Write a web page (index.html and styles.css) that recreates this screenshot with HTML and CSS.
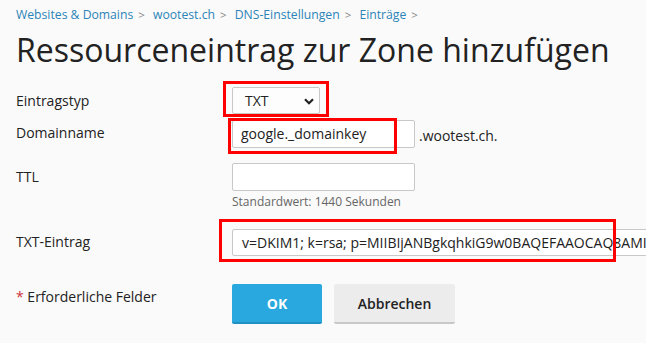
FILE: index.html
```html
<!DOCTYPE html>
<html lang="de">
<head>
<meta charset="utf-8">
<title>Ressourceneintrag zur Zone hinzufügen</title>
<link rel="stylesheet" href="styles.css">
</head>
<body>
<nav class="crumbs">
  <a href="#">Websites &amp; Domains</a><span class="sep">&gt;</span>
  <a href="#">wootest.ch</a><span class="sep">&gt;</span>
  <a href="#">DNS-Einstellungen</a><span class="sep">&gt;</span>
  <a href="#">Einträge</a><span class="sep">&gt;</span>
</nav>
<h1 class="title">Ressourceneintrag zur Zone hinzufügen</h1>
<form class="form">
  <div class="row row-type">
    <label class="label">Eintragstyp</label>
    <div class="field">
      <div class="select"><span>TXT</span>
        <svg class="chev" width="10" height="7" viewBox="0 0 10 7"><path d="M1 1.2 L5 5.2 L9 1.2" fill="none" stroke="#222" stroke-width="2.2"/></svg>
      </div>
    </div>
  </div>
  <div class="row row-domain">
    <label class="label">Domainname</label>
    <div class="field">
      <div class="input input-mid">google._domainkey</div><span class="suffix">.wootest.ch.</span>
    </div>
  </div>
  <div class="row row-ttl">
    <label class="label">TTL</label>
    <div class="field col">
      <div class="input input-mid"></div>
      <div class="hint">Standardwert: 1440 Sekunden</div>
    </div>
  </div>
  <div class="row row-txt">
    <label class="label">TXT-Eintrag</label>
    <div class="field">
      <div class="input input-wide">v=DKIM1; k=rsa; p=MIIBIjANBgkqhkiG9w0BAQEFAAOCAQ8AMI</div>
    </div>
  </div>
  <div class="row row-actions">
    <div class="label"><span class="req">*</span> Erforderliche Felder</div>
    <div class="field">
      <button type="button" class="btn btn-ok">OK</button>
      <button type="button" class="btn btn-cancel">Abbrechen</button>
    </div>
  </div>
</form>
<div class="mark mark1"></div>
<div class="mark mark2"></div>
<div class="mark mark3"></div>
</body>
</html>
```
FILE: styles.css
```css
html, body {
  margin: 0;
  padding: 0;
  background: #fafafa;
  overflow: hidden;
}
body {
  position: relative;
  width: 646px;
  height: 343px;
  padding-left: 16px;
  box-sizing: border-box;
  font-family: "Open Sans", "DejaVu Sans", sans-serif;
  color: #222;
  overflow: hidden;
}
.crumbs {
  padding-top: 6px;
  font-size: 12.2px;
  line-height: 18px;
  white-space: nowrap;
}
.crumbs a {
  color: #2b84b8;
  text-decoration: none;
}
.crumbs .sep {
  color: #888;
  margin: 0 5px 0 5px;
  font-size: 11.5px;
}
.title {
  margin: 6px 0 0;
  font-weight: 400;
  font-size: 32px;
  line-height: 40px;
  color: #222;
  white-space: nowrap;
}
.form {
  display: flex;
  flex-direction: column;
}
.row {
  display: flex;
  align-items: flex-start;
}
.label {
  width: 216px;
  flex: none;
  font-size: 14px;
  line-height: 18px;
}
.field {
  display: flex;
  align-items: center;
}
.field.col {
  flex-direction: column;
  align-items: flex-start;
}
.row-type { margin-top: 17px; }
.row-type .label { padding-top: 5px; }
.select {
  box-sizing: border-box;
  width: 88px;
  height: 27px;
  border: 1px solid #c8c8c8;
  border-radius: 2px;
  background: #fdfdfd;
  display: flex;
  align-items: center;
  justify-content: space-between;
  padding: 0 5px 0 12px;
  font-size: 14px;
}
.chev { margin-top: 1px; }
.input {
  box-sizing: border-box;
  height: 28px;
  border: 1px solid #c8c8c8;
  border-radius: 2px;
  background: #fff;
  font-size: 14px;
  line-height: 26px;
  padding: 0 8px;
  white-space: nowrap;
  overflow: hidden;
}
.input-mid { width: 183px; }
.input-wide { width: 430px; height: 27px; line-height: 25px; padding-left: 9px; padding-right: 16px; }
.row-domain { margin-top: 6px; }
.row-domain .label { padding-top: 4px; }
.suffix {
  font-size: 14px;
  margin-left: 4px;
  margin-top: 2px;
}
.row-ttl { margin-top: 15px; }
.row-ttl .label { padding-top: 5px; }
.hint {
  margin-top: 3px;
  font-size: 12px;
  line-height: 16px;
  color: #666;
}
.row-txt { margin-top: 19px; }
.row-txt .label { padding-top: 4px; }
.row-actions { margin-top: 28px; }
.row-actions .label { padding-top: 4px; }
.req { color: #d0343e; }
.btn {
  box-sizing: border-box;
  height: 40px;
  border: 0;
  border-radius: 2px;
  font-family: inherit;
  font-size: 14px;
  padding: 0;
  cursor: pointer;
}
.btn-ok {
  width: 90px;
  background: #28a8de;
  border-bottom: 2px solid #2190c2;
  color: #fff;
  font-weight: 700;
}
.btn-cancel {
  width: 121px;
  margin-left: 12px;
  background: #ececec;
  border-bottom: 2px solid #c8c8c8;
  color: #222;
  font-weight: 600;
}
.mark {
  position: absolute;
  box-sizing: border-box;
  border: 3px solid #ff0000;
  pointer-events: none;
}
.mark1 { left: 223px; top: 81px; width: 106px; height: 36px; }
.mark2 { left: 228px; top: 118px; width: 169px; height: 36px; }
.mark3 { left: 219px; top: 219px; width: 397px; height: 43px; }
```
